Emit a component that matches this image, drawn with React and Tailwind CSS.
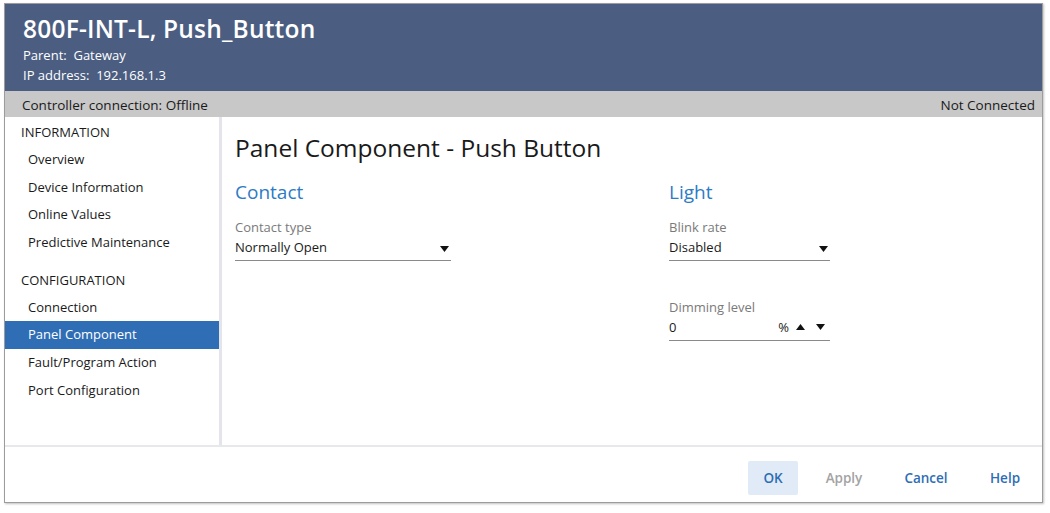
import React from "react";

const infoItems = ["Overview", "Device Information", "Online Values", "Predictive Maintenance"];
const configItems = ["Connection", "Panel Component", "Fault/Program Action", "Port Configuration"];

const Caret = ({ up }) => (
  <svg width="9" height="6" viewBox="0 0 9 6" className="shrink-0">
    {up ? <path d="M0 6 L4.5 0 L9 6 Z" fill="#111" /> : <path d="M0 0 L9 0 L4.5 6 Z" fill="#111" />}
  </svg>
);

const SelectField = ({ label, value, width }) => (
  <div className={width}>
    <div className="text-[13px] leading-[20px] text-[#7a7a7a]">{label}</div>
    <div className="flex items-center justify-between border-b border-[#8a8a8a] pb-[3px] text-[13px] leading-[20px] text-[#1a1a1a]">
      <span>{value}</span>
      <span className="mr-[2px] mt-[4px]">
        <Caret />
      </span>
    </div>
  </div>
);

const App = () => {
  return (
    <div
      className="w-[1050px] h-[513px] bg-white pl-[4px] pt-[3px]"
      style={{ fontFamily: '"Open Sans", "Noto Sans", sans-serif' }}
    >
      <div className="w-[1039px] h-[500px] border border-[#9c9c9c] shadow-[1px_1px_2px_rgba(0,0,0,0.25)] flex flex-col">
        {/* Header */}
        <div className="h-[87px] bg-[#4b5e81] text-white px-[18px] pt-[10px]">
          <div className="text-[24.5px] font-semibold leading-[30px] tracking-[0.2px]">800F-INT-L, Push_Button</div>
          <div className="text-[13px] leading-[20px] mt-[1px]">Parent:&nbsp; Gateway</div>
          <div className="text-[13px] leading-[20px]">IP address:&nbsp; 192.168.1.3</div>
        </div>

        {/* Status bar */}
        <div className="h-[26px] bg-[#c8c8c8] flex items-center justify-between pl-[17px] pr-[7px] pt-[2px] text-[13.5px] text-[#1a1a1a]">
          <span>Controller connection: Offline</span>
          <span>Not Connected</span>
        </div>

        {/* Body */}
        <div className="flex flex-1 min-h-0">
          <div className="w-[217px] border-r-[3px] border-[#e3e5ea] pt-[2px]">
            <div className="pl-[16px] text-[13px] leading-[27px] text-[#1a1a1a]">INFORMATION</div>
            {infoItems.map((item) => (
              <div key={item} className="pl-[23px] h-[27.67px] flex items-center text-[13px] text-[#1a1a1a]">
                {item}
              </div>
            ))}
            <div className="pl-[16px] text-[13px] leading-[27px] mt-[10px] text-[#1a1a1a]">CONFIGURATION</div>
            {configItems.map((item) => (
              <div
                key={item}
                className={
                  item === "Panel Component"
                    ? "pl-[23px] h-[27.67px] flex items-center text-[13px] bg-[#2f6db5] text-white"
                    : "pl-[23px] h-[27.67px] flex items-center text-[13px] text-[#1a1a1a]"
                }
              >
                {item}
              </div>
            ))}
          </div>

          <div className="flex-1 pl-[13px] pt-[15px]">
            <div className="text-[24.5px] leading-[32px] text-[#1a1a1a]">Panel Component - Push Button</div>
            <div className="flex mt-[15px]">
              <div className="w-[434px]">
                <div className="text-[19px] leading-[26px] text-[#2d7bc6]">Contact</div>
                <div className="mt-[12px]">
                  <SelectField label="Contact type" value="Normally Open" width="w-[216px]" />
                </div>
              </div>
              <div>
                <div className="text-[19px] leading-[26px] text-[#2d7bc6]">Light</div>
                <div className="mt-[12px]">
                  <SelectField label="Blink rate" value="Disabled" width="w-[161px]" />
                </div>
                <div className="mt-[36px] w-[161px]">
                  <div className="text-[13px] leading-[20px] text-[#7a7a7a]">Dimming level</div>
                  <div className="flex items-center justify-between border-b border-[#8a8a8a] pb-[3px] text-[13px] leading-[20px] text-[#1a1a1a]">
                    <span>0</span>
                    <span className="flex items-center gap-[11px] mr-[5px]">
                      <span className="-mr-[4px]">%</span>
                      <Caret up />
                      <Caret />
                    </span>
                  </div>
                </div>
              </div>
            </div>
          </div>
        </div>

        {/* Footer */}
        <div className="h-[57px] border-t-2 border-[#e6e8ec] flex items-start justify-end pt-[14px] pr-[12px] text-[13.5px] font-semibold">
          <button className="w-[50px] h-[34px] bg-[#e0ebf7] text-[#2e6db4] rounded-[2px]">OK</button>
          <button className="w-[60px] h-[34px] ml-[16px] text-[#a3a3a3]">Apply</button>
          <button className="w-[60px] h-[34px] ml-[22px] text-[#2e6db4]">Cancel</button>
          <button className="w-[50px] h-[34px] ml-[24px] text-[#2e6db4]">Help</button>
        </div>
      </div>
    </div>
  );
};

export default App;
